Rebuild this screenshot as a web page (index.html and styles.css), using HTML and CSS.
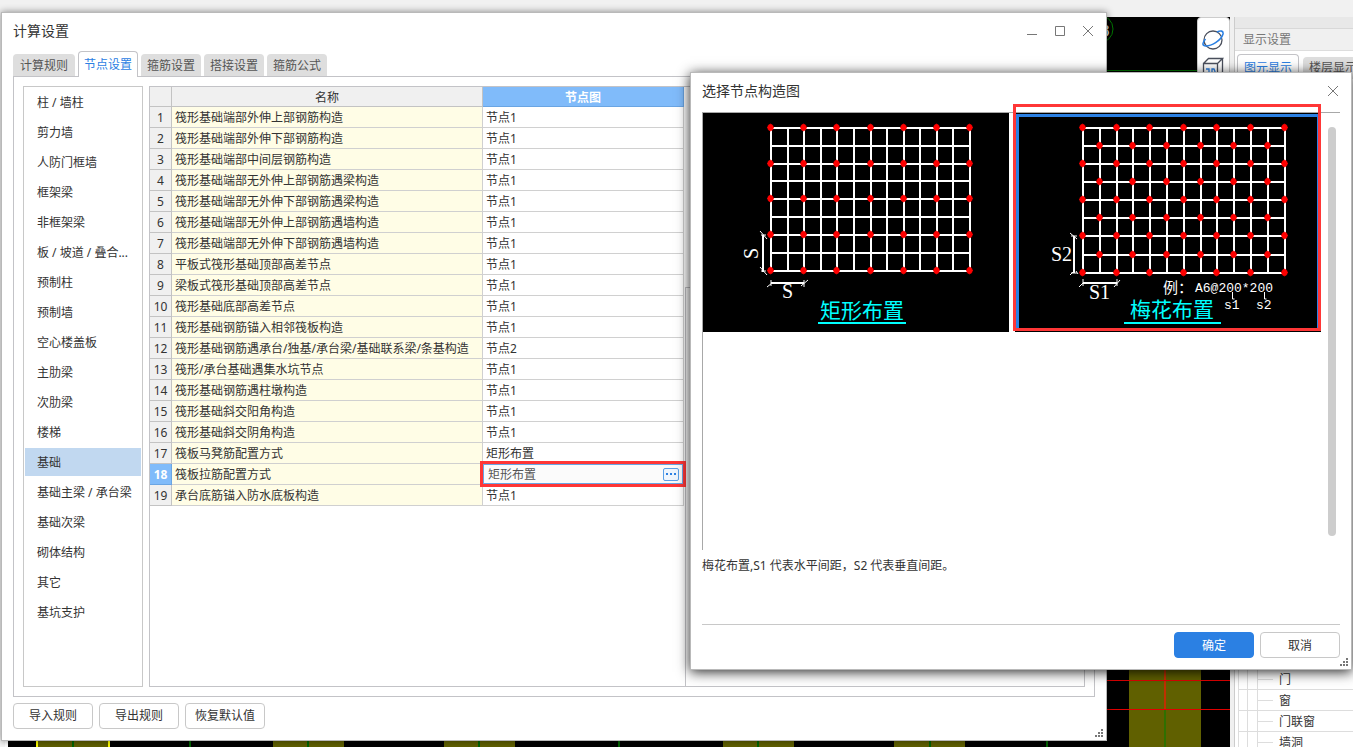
FILE: index.html
```html
<!DOCTYPE html>
<html lang="zh-CN">
<head>
<meta charset="utf-8">
<title>计算设置</title>
<link rel="stylesheet" href="styles.css">
</head>
<body>
<div class="app">
  <div class="ribbon"></div>
  <div class="workspace">
    <div class="gutter"></div>
    <div class="viewport">
      <svg class="drawing" aria-hidden="true">
        <g transform="translate(-8 -17)">
          <path d="M37 740h73v10h-73zM273 740h71v10h-71zM444 740h71v10h-71zM723 740h71v10h-71zM894 740h71v10h-71zM1129 600h72v160h-72z" fill="#606000"/>
          <path d="M37 740v10M109 740v10" stroke="#ff0" stroke-width="2"/>
          <path d="M73 740v10M190 740v10M308 740v10M479 740v10M619 740v10M758 740v10M930 740v10M1047 740v10" stroke="#006400" stroke-width="2"/>
          <path d="M1165 709v50" stroke="#2f7000" stroke-width="2"/>
          <path d="M1165 600v109" stroke="#c03000" stroke-width="2"/>
          <path d="M1100 680.500h140M1100 709.500h140" stroke="#e00000"/>
          <path d="M1100 70.500h100" stroke="#007800"/>
          <circle cx="1099" cy="29" r="14" fill="none" stroke="#007800"/>
          <text x="1101" y="36" class="axis-label">8</text>
        </g>
      </svg>
      <div class="view-tools">
        <svg width="22" height="22" viewBox="0 0 22 22" fill="none" stroke="#4a4f5c" stroke-width="1.300">
          <circle cx="11" cy="11" r="9"/>
          <path d="M3.500 10C0 14 0 17 4 17c5 0 15-5 17-12 .5-3-2-4-6-2" stroke="#2b80e3" stroke-width="1.600"/>
        </svg>
        <svg width="22" height="22" viewBox="0 0 22 22" fill="none" stroke="#4a4f5c" stroke-width="1.300">
          <path d="M1.500 20V6.500h14V20h-14M1.500 6.500l5-5h14l-5 5M20.500 1.500V15l-5 5"/>
          <path d="M4 12h3v5H4M10 12v5h2l1-2.500-1-2.500z" stroke="#2b80e3"/>
        </svg>
      </div>
    </div>
    <aside class="display-panel">
      <div class="panel-strip"></div>
      <div class="panel-title">显示设置</div>
      <div class="panel-tabs">
        <button class="tab tab-on">图元显示</button>
        <button class="tab">楼层显示</button>
      </div>
      <ul class="tree">
        <li>门</li><li>窗</li><li>门联窗</li><li>墙洞</li>
      </ul>
    </aside>
  </div>
</div>

<section class="window settings" aria-label="计算设置">
  <header class="titlebar">
    <h1>计算设置</h1>
    <div class="controls">
      <button aria-label="最小化"><svg width="12" height="12"><path d="M1 9.500h10"/></svg></button>
      <button aria-label="最大化"><svg width="12" height="12"><path d="M1.500 1.500h9v9h-9z"/></svg></button>
      <button aria-label="关闭"><svg width="12" height="12"><path d="M1 1l10 10M11 1L1 11"/></svg></button>
    </div>
  </header>
  <nav class="tabs">
    <button class="tab">计算规则</button>
    <button class="tab tab-on">节点设置</button>
    <button class="tab">箍筋设置</button>
    <button class="tab">搭接设置</button>
    <button class="tab">箍筋公式</button>
  </nav>
  <div class="pane">
    <ul class="types">
      <li>柱 / 墙柱</li>
      <li>剪力墙</li>
      <li>人防门框墙</li>
      <li>框架梁</li>
      <li>非框架梁</li>
      <li>板 / 坡道 / 叠合...</li>
      <li>预制柱</li>
      <li>预制墙</li>
      <li>空心楼盖板</li>
      <li>主肋梁</li>
      <li>次肋梁</li>
      <li>楼梯</li>
      <li class="current">基础</li>
      <li>基础主梁 / 承台梁</li>
      <li>基础次梁</li>
      <li>砌体结构</li>
      <li>其它</li>
      <li>基坑支护</li>
    </ul>
    <div class="nodes">
      <div class="nodes-list">
        <table>
          <colgroup><col class="col-num"><col class="col-name"><col></colgroup>
          <thead><tr><th></th><th>名称</th><th class="picked">节点图</th></tr></thead>
          <tbody>
            <tr><th>1</th><td>筏形基础端部外伸上部钢筋构造</td><td>节点1</td></tr>
            <tr><th>2</th><td>筏形基础端部外伸下部钢筋构造</td><td>节点1</td></tr>
            <tr><th>3</th><td>筏形基础端部中间层钢筋构造</td><td>节点1</td></tr>
            <tr><th>4</th><td>筏形基础端部无外伸上部钢筋遇梁构造</td><td>节点1</td></tr>
            <tr><th>5</th><td>筏形基础端部无外伸下部钢筋遇梁构造</td><td>节点1</td></tr>
            <tr><th>6</th><td>筏形基础端部无外伸上部钢筋遇墙构造</td><td>节点1</td></tr>
            <tr><th>7</th><td>筏形基础端部无外伸下部钢筋遇墙构造</td><td>节点1</td></tr>
            <tr><th>8</th><td>平板式筏形基础顶部高差节点</td><td>节点1</td></tr>
            <tr><th>9</th><td>梁板式筏形基础顶部高差节点</td><td>节点1</td></tr>
            <tr><th>10</th><td>筏形基础底部高差节点</td><td>节点1</td></tr>
            <tr><th>11</th><td>筏形基础钢筋锚入相邻筏板构造</td><td>节点1</td></tr>
            <tr><th>12</th><td>筏形基础钢筋遇承台/独基/承台梁/基础联系梁/条基构造</td><td>节点2</td></tr>
            <tr><th>13</th><td>筏形/承台基础遇集水坑节点</td><td>节点1</td></tr>
            <tr><th>14</th><td>筏形基础钢筋遇柱墩构造</td><td>节点1</td></tr>
            <tr><th>15</th><td>筏形基础斜交阳角构造</td><td>节点1</td></tr>
            <tr><th>16</th><td>筏形基础斜交阴角构造</td><td>节点1</td></tr>
            <tr><th>17</th><td>筏板马凳筋配置方式</td><td>矩形布置</td></tr>
            <tr><th class="picked">18</th><td>筏板拉筋配置方式</td><td class="editing"><div class="editor"><input aria-label="筏板拉筋配置方式" value="矩形布置"><button aria-label="选择节点图"><svg width="14" height="11"><path d="M2 5h2M6 5h2M10 5h2"/></svg></button></div></td></tr>
            <tr><th>19</th><td>承台底筋锚入防水底板构造</td><td>节点1</td></tr>
          </tbody>
        </table>
      </div>
      <div class="preview"></div>
    </div>
  </div>
  <footer class="actions">
    <button class="btn">导入规则</button>
    <button class="btn">导出规则</button>
    <button class="btn">恢复默认值</button>
  </footer>
  <svg class="grip" width="8" height="8"><path d="M6 1h2M3 4h2M6 4h2M0 7h2M3 7h2M6 7h2"/></svg>
</section>

<section class="window chooser" aria-label="选择节点构造图">
  <header class="titlebar">
    <h2>选择节点构造图</h2>
    <div class="controls">
      <button aria-label="关闭"><svg width="12" height="12"><path d="M1 1l10 10M11 1L1 11"/></svg></button>
    </div>
  </header>
  <div class="gallery">
    <button class="card" aria-label="矩形布置">
      <svg width="306" height="219" viewBox="703 113 306 219">
        <defs>
          <marker id="dot" markerUnits="userSpaceOnUse" markerWidth="8" markerHeight="8" refX="4" refY="4" overflow="visible">
            <path d="M4 .5L6 1.500 7 4 6 6.500 4 7.500 2 6.500 1 4 2 1.500zM.5 4h7" fill="#f00" stroke="#f00" stroke-width=".6"/>
          </marker>
        </defs>
        <path class="mesh" d="M771 127V272M788 127V272M804 127V272M821 127V272M837 127V272M854 127V272M871 127V272M887 127V272M904 127V272M920 127V272M937 127V272M953 127V272M970 127V272M770 128H971M770 146H971M770 164H971M770 181H971M770 199H971M770 217H971M770 235H971M770 253H971M770 271H971"/>
        <path class="dots" d="M770.500 127.500h33h33h34h33h33h33"/>
        <path class="dots" d="M770.500 163.500h33h33h34h33h33h33"/>
        <path class="dots" d="M770.500 198.500h33h33h34h33h33h33"/>
        <path class="dots" d="M770.500 234.500h33h33h34h33h33h33"/>
        <path class="dots" d="M770.500 270.500h33h33h34h33h33h33"/>
        <path class="mesh" d="M763 235V272M771 283H804"/>
        <path class="tick" d="M760 231l7 8M761 235h5M760 267l7 8M761 271h5M771 280v6M767 287l5-4M804 280v7M801 286l7-6"/>
        <text class="dim" x="782" y="298">S</text>
        <text class="dim" transform="translate(758 259) rotate(-90)">S</text>
        <text class="caption" x="820" y="318">矩形布置</text>
        <path class="rule" d="M818 323H906"/>
      </svg>
    </button>
    <button class="card chosen" aria-label="梅花布置" aria-pressed="true">
      <svg width="306" height="219" viewBox="1015 113 306 219">
        <path class="mesh" d="M1083 127V274M1100 127V274M1117 127V274M1133 127V274M1150 127V274M1167 127V274M1184 127V274M1201 127V274M1217 127V274M1234 127V274M1251 127V274M1268 127V274M1285 127V274M1082 128H1286M1082 146H1286M1082 164H1286M1082 182H1286M1082 200H1286M1082 218H1286M1082 236H1286M1082 255H1286M1082 273H1286"/>
        <path class="dots" d="M1082.500 127.500h34h33h34h33h34h34"/>
        <path class="dots" d="M1099.500 145.500h33h34h34h33h34"/>
        <path class="dots" d="M1082.500 163.500h34h33h34h33h34h34"/>
        <path class="dots" d="M1099.500 181.500h33h34h34h33h34"/>
        <path class="dots" d="M1082.500 199.500h34h33h34h33h34h34"/>
        <path class="dots" d="M1099.500 217.500h33h34h34h33h34"/>
        <path class="dots" d="M1082.500 235.500h34h33h34h33h34h34"/>
        <path class="dots" d="M1099.500 254.500h33h34h34h33h34"/>
        <path class="dots" d="M1082.500 272.500h34h33h34h33h34h34"/>
        <path class="mesh" d="M1074 236V273M1083 283H1117"/>
        <path class="tick" d="M1070 233l7 6M1071 236h6M1071 273h6M1070 275l3-3M1076 271l2 3M1083 279v7M1079 287l5-5M1117 279v7M1114 287l6-7M1232.500 292v7h2M1264.500 292v7h2"/>
        <text class="dim" x="1089" y="299">S1</text>
        <text class="dim" x="1051" y="261">S2</text>
        <text class="sample-cjk" x="1163" y="293">例：</text>
        <text class="sample" x="1195" y="292">A6@200*200</text>
        <text class="sample" x="1224" y="309">s1</text>
        <text class="sample" x="1256" y="309">s2</text>
        <text class="caption" x="1130" y="317">梅花布置</text>
        <path class="rule" d="M1124 323H1221"/>
      </svg>
    </button>
    <div class="scroll-thumb"></div>
  </div>
  <p class="note">梅花布置,S1 代表水平间距，S2 代表垂直间距。</p>
  <footer class="confirm">
    <button class="btn primary">确定</button>
    <button class="btn">取消</button>
  </footer>
  <svg class="grip" width="8" height="8"><path d="M6 1h2M3 4h2M6 4h2M0 7h2M3 7h2M6 7h2"/></svg>
</section>
</body>
</html>
```

FILE: styles.css
```css
* { box-sizing: border-box; }
html, body { height: 100%; }
body {
  margin: 0;
  position: relative;
  overflow: hidden;
  font: 12px/20px "Noto Sans", "Noto Sans CJK SC", sans-serif;
  color: #333;
  background: #f0f0f0;
}
button, input { font: inherit; color: inherit; padding: 0; margin: 0; border: 0; background: none; }
ul { list-style: none; margin: 0; padding: 0; }
h1, h2, p { margin: 0; font-size: 14px; font-weight: 400; }
svg { display: block; }

/* Application behind the dialogs */
.app { height: 100%; display: flex; flex-direction: column; }
.ribbon { height: 17px; flex: none; background: #f1f1f1; }
.workspace { flex: 1; min-height: 0; display: flex; }
.gutter { width: 8px; background: #f4f4f4; border-right: 3px solid #fff; }
.viewport { flex: 1; position: relative; background: #000; overflow: hidden; }
.drawing { width: 100%; height: 100%; }
.axis-label { font: 17px "Liberation Serif", serif; fill: #ddd; }
.view-tools {
  position: absolute; top: 0; right: 0; bottom: 80px; width: 33px;
  display: flex; flex-direction: column; align-items: center; gap: 6px;
  padding: 11px 2px 0 0;
  background: #fff; border: 1px solid #ccc; border-radius: 4px;
}
.display-panel {
  width: 119px; margin-left: 4px; flex: none;
  display: flex; flex-direction: column; overflow: hidden;
  background: #fff; border-left: 1px solid #ccc;
}
.panel-strip { height: 12px; flex: none; background: #e8e8e8; border-bottom: 1px solid #d8d8d8; }
.panel-title { height: 22px; flex: none; padding-left: 8px; line-height: 22px; color: #777; background: #f0f0f0; border-bottom: 1px solid #ddd; }
.panel-tabs { display: flex; align-items: flex-end; gap: 4px; padding: 3px 0 0 2px; white-space: nowrap; }
.panel-tabs .tab { flex: none; }
.panel-tabs .tab-on { padding: 0 6px; line-height: 22px; }
.panel-tabs .tab:last-child { line-height: 20px; }
.tree { margin: auto 0 -6px 3px; border-left: 1px solid #ddd; }
.tree li {
  height: 21px; padding-left: 40px; line-height: 22px; border-bottom: 1px solid #ddd;
  background:
    linear-gradient(#ddd, #ddd) 8px 0 / 1px 100% no-repeat,
    linear-gradient(#ddd, #ddd) 18px 0 / 1px 100% no-repeat,
    linear-gradient(#ddd, #ddd) 18px 10px / 16px 1px no-repeat;
}

/* Shared parts */
.window { position: absolute; display: flex; flex-direction: column; background: #fff; border: 1px solid #b9b9b9; }
.titlebar { display: flex; justify-content: space-between; align-items: center; flex: none; }
.controls { display: flex; gap: 16px; padding-right: 1px; }
.controls svg { fill: none; stroke: #777; stroke-width: 1; }
.tab { height: 22px; padding: 0 6px; line-height: 22px; color: #555; background: #dedede; border-radius: 4px 4px 0 0; }
.tab-on { height: 26px; margin-bottom: -1px; padding: 0 5px; line-height: 24px; color: #2b80e3; background: #fff; border: 1px solid #c3c3c7; border-bottom: 0; }
.btn { width: 80px; height: 26px; line-height: 24px; background: #fff; border: 1px solid #c8c8c8; border-radius: 4px; }
.primary { color: #fff; background: #2b80e3; border-color: #2b80e3; }
.grip { position: absolute; right: 3px; bottom: 3px; fill: none; stroke: #777; stroke-width: 2; }

/* Calculation settings */
.settings { inset: 12px 246px 6px 1px; padding: 0 11px 11px; box-shadow: 0 0 7px rgba(0, 0, 0, .45); }
.settings .titlebar { height: 38px; padding-bottom: 3px; }
.tabs { display: flex; align-items: flex-end; gap: 3px; height: 25px; flex: none; position: relative; }
.tabs .tab { line-height: 24px; }
.tabs .tab:first-child { padding: 0 7px; }
.pane { flex: 1; min-height: 0; display: flex; gap: 6px; padding: 9px; border: 1px solid #c3c3c7; }
.types { width: 120px; flex: none; display: flex; flex-direction: column; gap: 2px; padding: 1px; border: 1px solid #c8c8c8; }
.types li { height: 28px; padding-left: 12px; line-height: 30px; white-space: nowrap; }
.types .current { background: #c1d8f0; }
.nodes { flex: 1; min-width: 0; display: flex; border: 1px solid #c3c3c7; }
.nodes-list { width: 535px; flex: none; }
.preview { flex: 1; margin-top: 200px; border: 1px solid #c3c3c7; border-width: 1px 0 0 1px; }

table { width: 534px; table-layout: fixed; border-spacing: 0; }
.col-num { width: 22px; }
.col-name { width: 311px; }
th, td { height: 21px; padding: 2px 0 0; line-height: 18px; font-weight: 400; white-space: nowrap; border: 0 solid #d0d0d0; border-width: 0 1px 1px 0; }
thead th { height: 20px; line-height: 17px; }
th { background: #f0f0f0; border-color: #c3c3c3; }
td { padding-left: 3px; background: #fff; }
td:nth-child(2) { background: #fffde6; }
.picked { color: #fff; font-weight: 700; background: #80bbfa; border-color: #6aa5e3; }
.editing { padding: 0; position: relative; }
.editing::after { content: ""; position: absolute; inset: -3px; border: 3px solid #ff3636; pointer-events: none; }
.editor { display: flex; align-items: center; height: 20px; padding: 0 3px 0 4px; border: 1px solid #6aa5e3; background: #fbfbfb; }
.editor input { flex: 1; min-width: 0; height: 18px; padding-top: 2px; color: #555; outline: 0; }
.editor button { border: 1px solid #5b9fe6; border-radius: 2px; background: #eef5fd; }
.editor path { stroke: #2b80e3; stroke-width: 2; }
.actions { display: flex; gap: 6px; padding-top: 6px; flex: none; }

/* Node picture chooser */
.chooser { inset: 72px 1px 77px 690px; padding: 0 11px; box-shadow: 0 2px 12px rgba(0, 0, 0, .85); }
.chooser .titlebar { height: 39px; padding-bottom: 3px; }
.gallery { flex: 1; min-height: 0; position: relative; display: flex; align-items: flex-start; gap: 6px; border: 1px solid #a8a8a8; border-width: 1px 0 0 1px; }
.card { flex: none; background: #000; }
.chosen { position: relative; }
.chosen::before { content: ""; position: absolute; inset: 1px; border: 3px solid #2b80e3; }
.chosen::after { content: ""; position: absolute; inset: -9px 0 1px -2px; border: 3px solid #ff3636; }
.scroll-thumb { position: absolute; top: 14px; right: 4px; bottom: 14px; width: 8px; border-radius: 4px; background: #cdcdcd; }
.note { height: 74px; padding-top: 6px; flex: none; font-size: 12px; }
.confirm { display: flex; justify-content: flex-end; gap: 6px; height: 45px; padding-top: 7px; flex: none; border-top: 1px solid #c8c8c8; }
.confirm .btn { line-height: 26px; }

.mesh { fill: none; stroke: #fff; stroke-width: 2; }
.dots { fill: none; stroke: none; marker: url(#dot); }
.tick { fill: none; stroke: #fff; stroke-width: 1; }
.rule { stroke: #0ff; stroke-width: 2; }
.dim { font: 20px "Liberation Serif", serif; fill: #fff; }
.caption { font: 21px "Noto Sans CJK SC", sans-serif; fill: #0ff; }
.sample { font: 13px "Liberation Mono", monospace; fill: #fff; }
.sample-cjk { font: 15px "Noto Sans CJK SC", sans-serif; fill: #fff; }
```
